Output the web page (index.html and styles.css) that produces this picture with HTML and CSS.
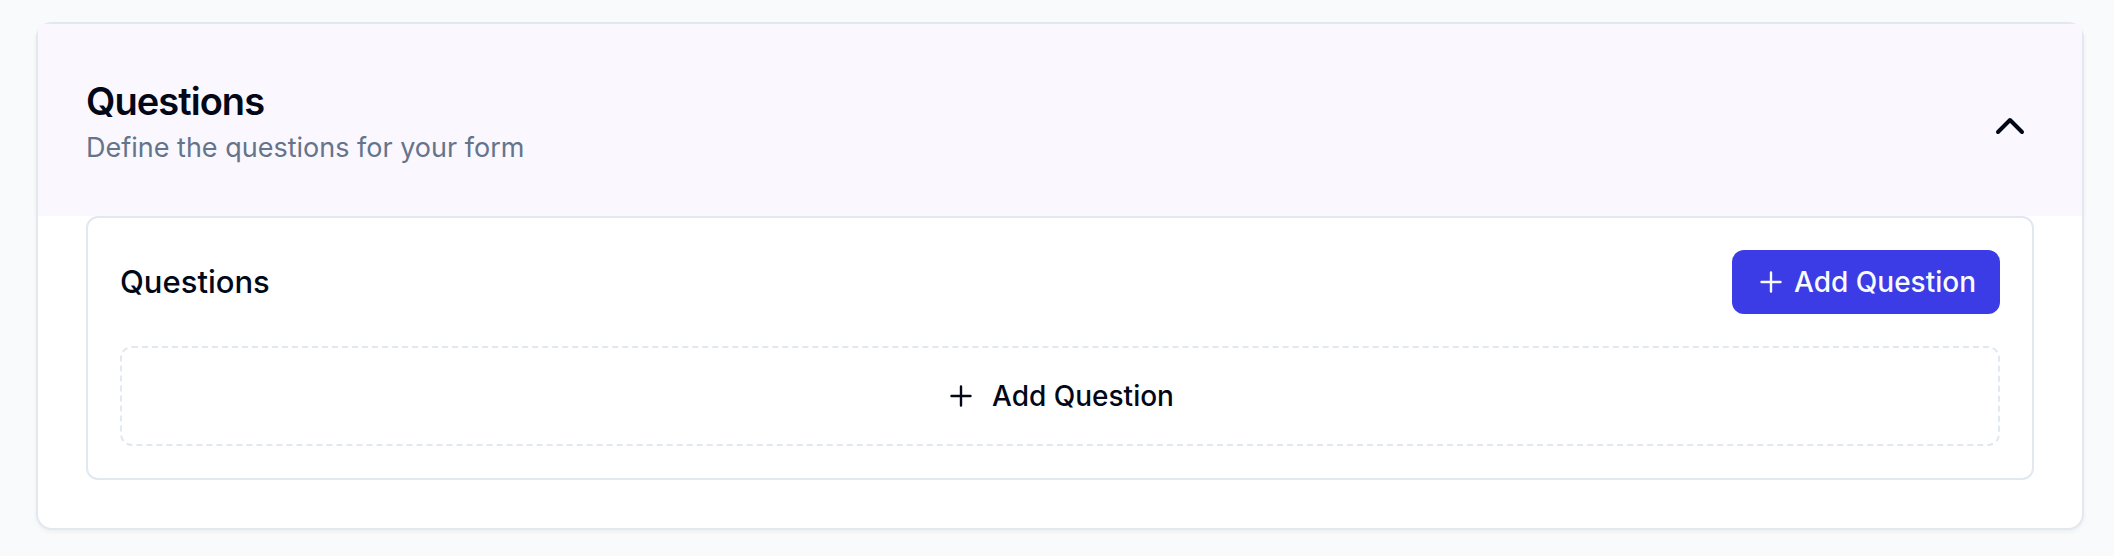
FILE: index.html
```html
<!DOCTYPE html>
<html lang="en">
<head>
<meta charset="utf-8">
<title>Questions</title>
<link rel="stylesheet" href="styles.css">
</head>
<body>
<main class="card">
  <header class="card-header">
    <div class="card-heading">
      <h1 class="card-title">Questions</h1>
      <p class="card-description">Define the questions for your form</p>
    </div>
    <button class="toggle" type="button" aria-label="Collapse section" aria-expanded="true">
      <svg class="chevron" viewBox="0 0 24 24" aria-hidden="true"><path d="m18 15-6-6-6 6"/></svg>
    </button>
  </header>
  <div class="card-body">
    <section class="panel">
      <div class="panel-header">
        <h2 class="panel-title">Questions</h2>
        <button class="button button-primary" type="button">
          <svg class="plus" viewBox="0 0 15 15" aria-hidden="true"><path d="M7.5 2.75v9.5M2.75 7.5h9.5"/></svg>
          Add Question
        </button>
      </div>
      <button class="button button-dashed" type="button">
        <svg class="plus" viewBox="0 0 15 15" aria-hidden="true"><path d="M7.5 2.75v9.5M2.75 7.5h9.5"/></svg>
        Add Question
      </button>
    </section>
  </div>
</main>
</body>
</html>
```
FILE: styles.css
```css
* {
  box-sizing: border-box;
}

body {
  margin: 0;
  padding: 22px 30px 24px 36px;
  background: #f8fafc;
  color: #020817;
  font-family: Inter, "Liberation Sans", sans-serif;
  font-size: 28px;
  line-height: 40px;
}

h1,
h2,
p {
  margin: 0;
}

button {
  border: 0;
  background: none;
  color: inherit;
  font: inherit;
  cursor: pointer;
}

.card {
  border: 2px solid #e2e8f0;
  border-radius: 16px;
  background: #ffffff;
  box-shadow: 0 2px 4px rgba(0, 0, 0, 0.05);
}

.card-header {
  display: flex;
  align-items: center;
  justify-content: space-between;
  padding: 60px 48px 48px;
  background: #faf7ff;
}

.card-heading {
  display: grid;
  gap: 10px;
}

.card-title {
  font-size: 38px;
  font-weight: 600;
  line-height: 34px;
  letter-spacing: -0.025em;
}

.card-description {
  color: #64748b;
  font-size: 27px;
}

.toggle {
  display: flex;
  padding: 0;
}

.chevron {
  width: 48px;
  height: 48px;
  fill: none;
  stroke: currentColor;
  stroke-width: 2;
  stroke-linecap: round;
  stroke-linejoin: round;
}

.card-body {
  padding: 0 48px 48px;
}

.panel {
  display: grid;
  gap: 32px;
  padding: 32px;
  border: 2px solid #e2e8f0;
  border-radius: 12px;
}

.panel-header {
  display: flex;
  align-items: center;
  justify-content: space-between;
}

.panel-title {
  font-size: 31px;
  font-weight: 500;
}

.button {
  display: flex;
  align-items: center;
  justify-content: center;
  border-radius: 12px;
  font-weight: 500;
}

.button-primary {
  gap: 8px;
  padding: 12px 24px;
  background: #3b3ce6;
  color: #f8fafc;
}

.button-dashed {
  gap: 16px;
  padding: 28px 32px;
  border: 2px dashed #e2e8f0;
}

.plus {
  width: 30px;
  height: 30px;
  fill: none;
  stroke: currentColor;
  stroke-width: 1.2;
  stroke-linecap: round;
}
```
